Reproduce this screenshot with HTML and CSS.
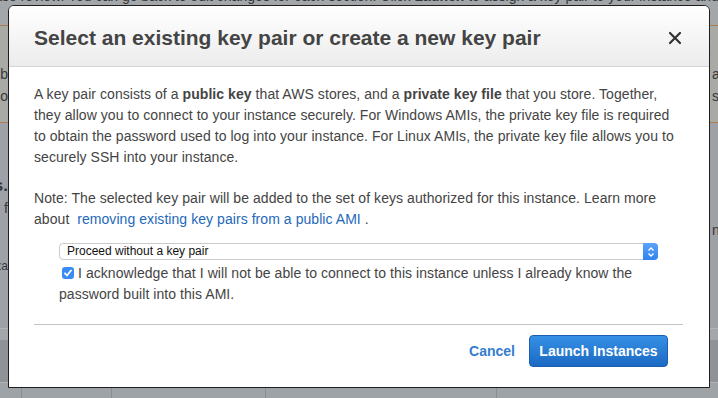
FILE: index.html
```html
<!DOCTYPE html>
<html>
<head>
    <title>Launch Instance Wizard</title>
    <meta charset="UTF-8">
    <link rel="stylesheet" href="styles.css">
</head>
<body>
    <div class="page">
        <div class="page-top">
            <p class="page-intro">Please review. You can go back to edit changes for each section. Click <b>Launch</b> to assign a key pair to your instance and complete the launch process.</p>
        </div>
        <div class="page-review">
            <div class="edge-row"><span class="edge-left">Describ</span><span class="edge-right">a</span></div>
            <div class="edge-row"><span class="edge-left">Boo</span><span class="edge-right">s</span></div>
        </div>
        <div class="page-details">
            <div class="edge-row row-title"><span class="edge-left">Details.</span></div>
            <div class="edge-row"><span class="edge-left">Her f</span></div>
            <div class="edge-row row-mid"><span class="edge-left"></span><span class="edge-right">na</span></div>
            <div class="edge-row row-low"><span class="edge-left">Optimiza</span></div>
        </div>
        <div class="page-table">
            <div class="table-head"></div>
            <div class="table-row">
                <span class="cell cell-a"></span>
                <span class="cell cell-b"></span>
                <span class="cell cell-c"></span>
                <span class="cell cell-d"></span>
                <span class="cell cell-e"></span>
            </div>
        </div>
    </div>

    <div class="modal">
        <div class="modal-header">
            <h2>Select an existing key pair or create a new key pair</h2>
            <button class="close" aria-label="Close">
                <svg width="14" height="14" viewBox="0 0 14 14">
                    <path d="M2 2 L12 12 M12 2 L2 12" stroke="#333" stroke-width="2.2" stroke-linecap="round"/>
                </svg>
            </button>
        </div>

        <div class="modal-body">
            <p>A key pair consists of a <b>public key</b> that AWS stores, and a <b>private key file</b> that you store. Together, they allow you to connect to your instance securely. For Windows AMIs, the private key file is required to obtain the password used to log into your instance. For Linux AMIs, the private key file allows you to securely SSH into your instance.</p>
            <p class="note">Note: The selected key pair will be added to the set of keys authorized for this instance. Learn more about&nbsp; <a href="#">removing existing key pairs from a public AMI</a> .</p>

            <div class="select">
                <span class="select-text">Proceed without a key pair</span>
                <span class="stepper">
                    <svg width="8" height="12" viewBox="0 0 8 12">
                        <path d="M1.5 4.5 L4 2 L6.5 4.5 M1.5 7.5 L4 10 L6.5 7.5" stroke="#fff" stroke-width="1.4" fill="none"/>
                    </svg>
                </span>
            </div>

            <label class="ack">
                <span class="checkbox">
                    <svg width="12" height="12" viewBox="0 0 12 12">
                        <path d="M3 6.3 L5 8.5 L9 3.5" stroke="#fff" stroke-width="1.8" fill="none" stroke-linecap="round" stroke-linejoin="round"/>
                    </svg>
                </span>I acknowledge that I will not be able to connect to this instance unless I already know the password built into this AMI.
            </label>

            <hr>
        </div>

        <div class="modal-footer">
            <a href="#" class="cancel">Cancel</a>
            <button class="launch">Launch Instances</button>
        </div>
    </div>
</body>
</html>
```

FILE: styles.css
```css
* {
    box-sizing: border-box;
    margin: 0;
    padding: 0;
}

body {
    font-family: 'Liberation Sans', Arial, sans-serif;
    background-color: #9ea2a7;
    color: #444;
    overflow: hidden;
    height: 398px;
}

/* dimmed page behind the dialog */

.page {
    color: #35383b;
    font-size: 14px;
}

.page-top {
    height: 25px;
    background: #a4a7aa;
    overflow: hidden;
}

.page-intro {
    white-space: nowrap;
    line-height: 16px;
    margin-top: -12px;
    margin-left: -26px;
}

.page-review {
    height: 98px;
    background: #a9aaa6;
    border-top: 1px solid #b07b4e;
    border-bottom: 1px solid #b07b4e;
    padding-top: 37px;
    overflow: hidden;
}

.edge-row {
    display: flex;
    justify-content: space-between;
    line-height: 22px;
    height: 22px;
    white-space: nowrap;
}

.edge-left {
    display: flex;
    justify-content: flex-end;
    width: 8px;
    overflow: hidden;
}

.edge-right {
    width: 8px;
    padding-left: 2px;
    overflow: hidden;
}

.page-details {
    height: 206px;
    padding-top: 52px;
    overflow: hidden;
    border-bottom: 1px solid #b2b5b8;
}

.row-title {
    font-size: 17px;
    font-weight: 700;
}

.row-mid {
    margin-top: 0;
}

.row-low {
    margin-top: 14px;
    font-size: 12px;
}

.page-table {
    padding-top: 11px;
    background: #a3a7ab;
}

.table-head {
    height: 42px;
    background: #8f9398;
}

.table-row {
    display: flex;
    height: 16px;
    border-top: 1px solid #b2b5b8;
    background: #9ea3a8;
}

.cell {
    border-right: 1px solid #8a8e93;
}

.cell-a { width: 22px; }
.cell-b { width: 90px; }
.cell-c { width: 154px; }
.cell-d { width: 231px; }
.cell-e { flex: 1; border-right: none; }

/* dialog */

.modal {
    position: absolute;
    left: 8px;
    top: 5px;
    width: 702px;
    background: #fff;
    border: 1px solid #1e1e1e;
    border-radius: 6px 6px 0 0;
}

.modal-header {
    display: flex;
    justify-content: space-between;
    align-items: center;
    height: 61px;
    padding: 4px 27px 0 25px;
    background: linear-gradient(#ffffff, #ececec);
    border-bottom: 1px solid #d6d6d6;
    border-radius: 5px 5px 0 0;
}

.modal-header h2 {
    font-size: 21px;
    font-weight: 700;
    color: #444;
    line-height: 24px;
}

.close {
    border: none;
    background: none;
    display: flex;
    cursor: pointer;
}

.modal-body {
    padding: 17px 26px 0 25px;
    font-size: 14px;
    line-height: 21px;
}

.modal-body p,
.ack {
    letter-spacing: 0.06px;
}

.modal-body p {
    margin-bottom: 20px;
}

.modal-body p.note {
    margin-bottom: 13px;
}

.modal-body a {
    color: #1e68b9;
    text-decoration: none;
}

.select {
    display: flex;
    align-items: center;
    justify-content: space-between;
    margin-left: 25px;
    width: 599px;
    height: 17px;
    border: 1px solid #cbcbcb;
    border-radius: 4px;
    background: #fff;
}

.select-text {
    font-size: 12px;
    color: #111;
    padding-left: 7px;
    line-height: 15px;
}

.stepper {
    display: flex;
    align-items: center;
    justify-content: center;
    width: 15px;
    height: 17px;
    margin: -1px -1px -1px 0;
    background: linear-gradient(#5aa3f8, #2f83f0);
    border-radius: 0 4px 4px 0;
}

.ack {
    display: block;
    margin: 3px 0 0 25px;
}

.checkbox {
    display: inline-flex;
    align-items: center;
    justify-content: center;
    width: 12px;
    height: 12px;
    margin: 0 4px 0 3px;
    vertical-align: -1px;
    background: #3a8cf4;
    border-radius: 3px;
}

hr {
    border: none;
    border-top: 1px solid #c3c3c3;
    margin-top: 19px;
}

.modal-footer {
    display: flex;
    justify-content: flex-end;
    align-items: center;
    gap: 14px;
    padding: 10px 41px 20px 25px;
}

.cancel {
    color: #337dd1;
    font-weight: 700;
    font-size: 14px;
    text-decoration: none;
}

.launch {
    font-family: inherit;
    font-size: 14px;
    font-weight: 700;
    color: #fff;
    line-height: 20px;
    padding: 0;
    white-space: nowrap;
    width: 139px;
    height: 32px;
    background: linear-gradient(#3690e6, #1b69c3);
    border: 1px solid #1a5fb0;
    border-radius: 4px;
    cursor: pointer;
}
```
